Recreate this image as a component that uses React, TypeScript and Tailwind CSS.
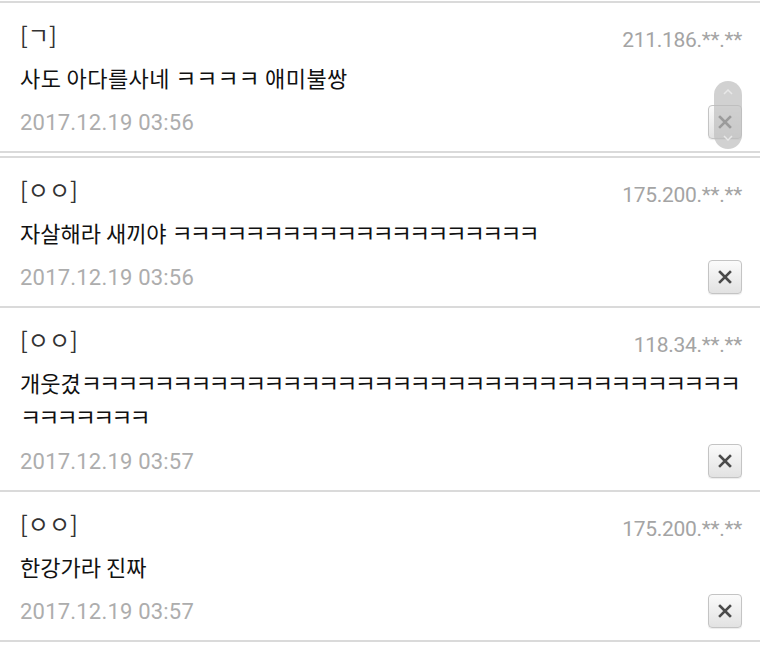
import React from 'react';

type Comment = {
  name: string;
  ip: string;
  lines: string[];
  date: string;
  looseK?: boolean;
};

const k = (n: number) => 'ㅋ'.repeat(n);

const comments: Comment[] = [
  { name: '[ㄱ]', ip: '211.186.**.**', lines: ['사도 아다를사네 ㅋㅋㅋㅋ 애미불쌍'], date: '2017.12.19 03:56', looseK: true },
  { name: '[ㅇㅇ]', ip: '175.200.**.**', lines: ['자살해라 새끼야 ' + k(20)], date: '2017.12.19 03:56' },
  { name: '[ㅇㅇ]', ip: '118.34.**.**', lines: ['개웃겼' + k(36), k(7)], date: '2017.12.19 03:57' },
  { name: '[ㅇㅇ]', ip: '175.200.**.**', lines: ['한강가라 진짜'], date: '2017.12.19 03:57' },
];

const kr = { fontFamily: '"Noto Sans CJK KR", "Noto Sans", sans-serif' };
const num = { fontFamily: 'Roboto, "Liberation Sans", sans-serif' };

// the ㅋ runs are set tighter than the syllables in the reference
function Line({ text, loose }: { text: string; loose?: boolean }) {
  const parts = text.split(/(ㅋ+)/).filter(Boolean);
  return (
    <div className={loose ? 'tracking-[0.4px]' : ''}>
      {parts.map((p, i) =>
        p[0] === 'ㅋ' ? (
          <span key={i} className={loose ? 'tracking-[0px] text-[23px]' : 'tracking-[-2.9px] text-[23px]'}>{p}</span>
        ) : (
          <span key={i}>{p}</span>
        )
      )}
    </div>
  );
}

function DeleteButton() {
  return (
    <button className="w-[34px] h-[34px] rounded-[4px] border border-[#c4c4c4] bg-gradient-to-b from-[#fbfbfb] to-[#e2e2e2] flex items-center justify-center shadow-[0_1px_1px_rgba(0,0,0,0.08)]">
      <svg width="14" height="14" viewBox="0 0 14 14">
        <path d="M2 2 L12 12 M12 2 L2 12" stroke="#4a4a4a" strokeWidth="2.6" strokeLinecap="square" />
      </svg>
    </button>
  );
}

function CommentCard({ c, first }: { c: Comment; first?: boolean }) {
  return (
    <div className="relative pl-[20px] pr-[18px] pt-[11px] pb-[9px] border-b-2 border-[#dadada]">
      <div className="flex items-end justify-between h-[40px]">
        <span className="text-[23px] leading-[40px] text-[#333]" style={kr}>{c.name}</span>
        <span className="text-[21px] leading-[28px] text-[#a4a4a4] tracking-[-0.3px]" style={num}>{c.ip}</span>
      </div>
      <div className="mt-[6px] text-[22px] leading-[34px] text-[#111] whitespace-nowrap" style={kr}>
        {c.lines.map((l, i) => (
          <Line key={i} text={l} loose={c.looseK} />
        ))}
      </div>
      <div className="mt-[8px] flex items-center justify-between h-[40px]">
        <span className="text-[22px] tracking-[0.2px] text-[#adadad]" style={num}>{c.date}</span>
        <DeleteButton />
      </div>
      {first && (
        <div className="absolute right-[18px] top-[78px] w-[28px] h-[68px] rounded-full bg-[#bdbdbd]/70 flex flex-col items-center justify-between py-[8px]">
          <svg width="10" height="6" viewBox="0 0 10 6"><path d="M1 5 L5 1 L9 5" stroke="#e8e8e8" strokeWidth="1.5" fill="none" /></svg>
          <svg width="10" height="6" viewBox="0 0 10 6"><path d="M1 1 L5 5 L9 1" stroke="#e8e8e8" strokeWidth="1.5" fill="none" /></svg>
        </div>
      )}
    </div>
  );
}

export default function App() {
  return (
    <div className="w-[760px] h-[655px] bg-white overflow-hidden pt-px">
      <div className="border-t-2 border-[#dadada]">
        <CommentCard c={comments[0]} first />
      </div>
      <div className="mt-[3px] border-t-2 border-[#dadada]">
        {comments.slice(1).map((c, i) => (
          <CommentCard key={i} c={c} />
        ))}
      </div>
    </div>
  );
}
